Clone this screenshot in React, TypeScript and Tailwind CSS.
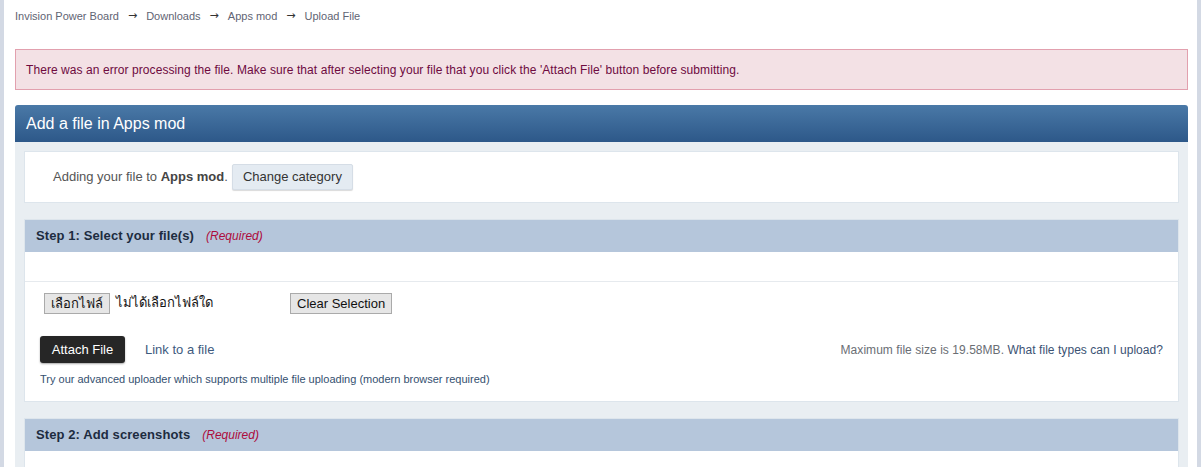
export default function App() {
  return (
    <div className="h-[467px] w-full overflow-hidden bg-[#d3d9e4] px-[4px] font-['Liberation_Sans','Noto_Sans',sans-serif]">
      <div className="h-full bg-white pl-[11px] pr-[9px]">
        <div className="flex h-[32px] items-center pt-[1px] text-[11px] text-[#5f6473]">
          <span>Invision Power Board</span>
          <span className="mx-[9px] font-['DejaVu_Sans',sans-serif] text-[11px] text-[#333]">→</span>
          <span>Downloads</span>
          <span className="mx-[9px] font-['DejaVu_Sans',sans-serif] text-[11px] text-[#333]">→</span>
          <span>Apps mod</span>
          <span className="mx-[9px] font-['DejaVu_Sans',sans-serif] text-[11px] text-[#333]">→</span>
          <span>Upload File</span>
        </div>

        <div className="mt-[17px] flex h-[41px] items-center border border-[#e2a0ae] bg-[#f3e1e5] px-[10px] text-[12px] tracking-[0.07px] text-[#6e0a3f]">
          There was an error processing the file. Make sure that after selecting your file that you click the 'Attach File' button before submitting.
        </div>

        <div className="mt-[15px] flex h-[37px] items-center rounded-t-[3px] bg-gradient-to-b from-[#4a79a7] to-[#2d5889] pl-[11px] text-[16px] text-white">
          Add a file in Apps mod
        </div>

        <div className="bg-[#e9eef2] px-[9px] pt-[9px]">
          <div className="flex h-[52px] items-center border border-[#dde5ec] bg-white pl-[28px] text-[13px] text-[#555]">
            <span>
              Adding your file to <b className="text-[#444]">Apps mod</b>.
            </span>
            <button className="ml-[4px] h-[26px] rounded-[2px] border border-[#d5dde6] bg-[#e4ebf2] px-[10px] text-[13px] text-[#333] shadow-[0_1px_1px_rgba(0,0,0,0.15)]">
              Change category
            </button>
          </div>

          <div className="mt-[16px] border border-[#dde5ec] bg-white">
            <div className="flex h-[32px] items-center bg-[#b5c6db] pl-[11px]">
              <span className="text-[13px] font-bold tracking-[0.1px] text-[#1d2c40]">Step 1: Select your file(s)</span>
              <span className="ml-[12px] text-[12px] italic text-[#ad0c3c]">(Required)</span>
            </div>
            <div className="h-[30px] border-b border-[#e6eaee]" />
            <div className="px-[15px] pb-[13px]">
              <div className="mt-[10px] flex h-[22px] items-center pl-[4px]">
                <button className="h-[21px] border border-[#aaa] bg-[#e6e6e6] px-[6px] text-[13px] text-[#111]">
                  เลือกไฟล์
                </button>
                <span className="ml-[6px] w-[174px] text-[13px] text-[#111]">ไม่ได้เลือกไฟล์ใด</span>
                <button className="h-[21px] border border-[#aaa] bg-[#e6e6e6] px-[6px] text-[13px] text-[#111]">
                  Clear Selection
                </button>
              </div>
              <div className="mt-[22px] flex items-center justify-between">
                <div className="flex items-center">
                  <button className="h-[27px] w-[85px] rounded-[3px] bg-[#262626] text-[13px] text-white shadow-[0_1px_2px_rgba(0,0,0,0.35)]">
                    Attach File
                  </button>
                  <span className="ml-[20px] text-[13px] text-[#3e5a7e]">Link to a file</span>
                </div>
                <div className="text-[12px] tracking-[0.05px] text-[#6a6e74]">
                  Maximum file size is 19.58MB. <span className="text-[#3b5273]">What file types can I upload?</span>
                </div>
              </div>
              <div className="mt-[8px] text-[11px] text-[#34506f]">
                Try our advanced uploader which supports multiple file uploading (modern browser required)
              </div>
            </div>
          </div>

          <div className="mt-[16px] border border-[#dde5ec] bg-white">
            <div className="flex h-[32px] items-center bg-[#b5c6db] pl-[11px]">
              <span className="text-[13px] font-bold tracking-[0.1px] text-[#1d2c40]">Step 2: Add screenshots</span>
              <span className="ml-[12px] text-[12px] italic text-[#ad0c3c]">(Required)</span>
            </div>
            <div className="h-[40px]" />
          </div>
        </div>
      </div>
    </div>
  )
}
